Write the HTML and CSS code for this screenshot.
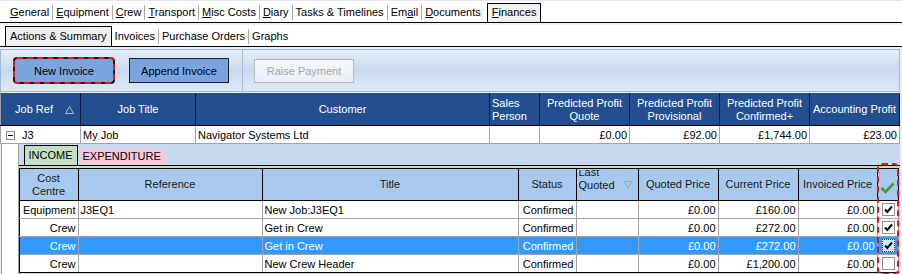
FILE: index.html
```html
<!DOCTYPE html>
<html lang="en">
<head>
    <meta charset="UTF-8">
    <title>Finances</title>
    <link rel="stylesheet" href="styles.css">
</head>
<body>

    <div class="tabbar tabbar-main">
        <span class="tab"><u>G</u>eneral</span>
        <span class="tab"><u>E</u>quipment</span>
        <span class="tab"><u>C</u>rew</span>
        <span class="tab"><u>T</u>ransport</span>
        <span class="tab"><u>M</u>isc Costs</span>
        <span class="tab"><u>D</u>iary</span>
        <span class="tab">Tasks &amp; Timelines</span>
        <span class="tab">Em<u>a</u>il</span>
        <span class="tab"><u>D</u>ocuments</span>
        <span class="tab active"><u>F</u>inances</span>
    </div>

    <div class="tabbar tabbar-sub">
        <span class="tab active">Actions &amp; Summary</span>
        <span class="tab">Invoices</span>
        <span class="tab">Purchase Orders</span>
        <span class="tab">Graphs</span>
    </div>

    <div class="toolbar">
        <button class="btn btn-primary btn-marked">New Invoice</button>
        <button class="btn btn-primary">Append Invoice</button>
        <span class="toolbar-sep"></span>
        <button class="btn btn-disabled" disabled>Raise Payment</button>
    </div>

    <table class="grid jobs">
        <colgroup>
            <col style="width:80px"><col style="width:115px"><col style="width:294px"><col style="width:50px">
            <col style="width:90px"><col style="width:90px"><col style="width:90px"><col style="width:90px">
        </colgroup>
        <thead>
            <tr>
                <th>
                    <div class="head-sort">
                        <span>Job Ref</span>
                        <svg class="sort-icon" width="9" height="8" viewBox="0 0 9 8"><path d="M4.5 0.5 L8.5 7.5 L0.5 7.5 Z" fill="none" stroke="#aab6c8"/></svg>
                    </div>
                </th>
                <th>Job Title</th>
                <th>Customer</th>
                <th class="left">Sales<br>Person</th>
                <th>Predicted Profit<br>Quote</th>
                <th>Predicted Profit<br>Provisional</th>
                <th>Predicted Profit<br>Confirmed+</th>
                <th>Accounting Profit</th>
            </tr>
        </thead>
        <tbody>
            <tr class="job-row">
                <td><span class="collapse-box"></span>J3</td>
                <td>My Job</td>
                <td>Navigator Systems Ltd</td>
                <td></td>
                <td class="num">£0.00</td>
                <td class="num">£92.00</td>
                <td class="num">£1,744.00</td>
                <td class="num">£23.00</td>
            </tr>
            <tr>
                <td colspan="8" class="detail-cell">
                    <div class="detail-wrap">
                        <div class="indent"></div>
                        <div class="detail">
                            <div class="subtabs">
                                <span class="subtab income">INCOME</span>
                                <span class="subtab expenditure">EXPENDITURE</span>
                            </div>
                            <div class="subpanel">
                                <table class="grid lines">
                                    <colgroup>
                                        <col style="width:59px"><col style="width:184px"><col style="width:256px"><col style="width:58px">
                                        <col style="width:62px"><col style="width:80px"><col style="width:80px"><col style="width:79px"><col style="width:21px">
                                    </colgroup>
                                    <thead>
                                        <tr>
                                            <th>Cost<br>Centre</th>
                                            <th>Reference</th>
                                            <th>Title</th>
                                            <th>Status</th>
                                            <th class="left">
                                                <div class="head-clip">
                                                    <span class="clipped">Last<br>Quoted</span>
                                                    <svg class="filter-icon" width="8" height="8" viewBox="0 0 8 8"><path d="M0.5 0.5 L7.5 0.5 L4 7.5 Z" fill="none" stroke="#9aa4b4"/></svg>
                                                </div>
                                            </th>
                                            <th>Quoted Price</th>
                                            <th>Current Price</th>
                                            <th>Invoiced Price</th>
                                            <th class="check-head">
                                                <svg width="15" height="12" viewBox="0 0 15 12"><path d="M1.5 6 L5.5 10 L13.5 1.5" fill="none" stroke="#36a336" stroke-width="2.6"/></svg>
                                            </th>
                                        </tr>
                                    </thead>
                                    <tbody>
                                        <tr>
                                            <td class="num">Equipment</td>
                                            <td>J3EQ1</td>
                                            <td>New Job:J3EQ1</td>
                                            <td class="num">Confirmed</td>
                                            <td></td>
                                            <td class="num">£0.00</td>
                                            <td class="num">£160.00</td>
                                            <td class="num">£0.00</td>
                                            <td class="check"><span class="checkbox checked"></span></td>
                                        </tr>
                                        <tr>
                                            <td class="num">Crew</td>
                                            <td></td>
                                            <td>Get in Crew</td>
                                            <td class="num">Confirmed</td>
                                            <td></td>
                                            <td class="num">£0.00</td>
                                            <td class="num">£272.00</td>
                                            <td class="num">£0.00</td>
                                            <td class="check"><span class="checkbox checked"></span></td>
                                        </tr>
                                        <tr class="selected">
                                            <td class="num">Crew</td>
                                            <td></td>
                                            <td>Get in Crew</td>
                                            <td class="num">Confirmed</td>
                                            <td></td>
                                            <td class="num">£0.00</td>
                                            <td class="num">£272.00</td>
                                            <td class="num">£0.00</td>
                                            <td class="check"><span class="checkbox checked"></span></td>
                                        </tr>
                                        <tr>
                                            <td class="num">Crew</td>
                                            <td></td>
                                            <td>New Crew Header</td>
                                            <td class="num">Confirmed</td>
                                            <td></td>
                                            <td class="num">£0.00</td>
                                            <td class="num">£1,200.00</td>
                                            <td class="num">£0.00</td>
                                            <td class="check"><span class="checkbox"></span></td>
                                        </tr>
                                    </tbody>
                                </table>
                            </div>
                            <div class="marker"></div>
                        </div>
                    </div>
                </td>
            </tr>
        </tbody>
    </table>

</body>
</html>
```

FILE: styles.css
```css
* {
    box-sizing: border-box;
}

body {
    margin: 0;
    width: 902px;
    height: 274px;
    overflow: hidden;
    background-color: #f0f0f0;
    font-family: 'Liberation Sans', Arial, sans-serif;
    font-size: 11px;
    color: #000;
}

/* tab strips */
.tabbar {
    display: flex;
    align-items: flex-end;
    background: #fff;
    border-bottom: 1px solid #000;
    margin-bottom: 2px;
}

.tabbar-main {
    height: 23px;
    border-top: 1px solid #dce7f5;
    padding-left: 7px;
}

.tabbar-sub {
    height: 22px;
    padding-left: 5px;
}

.tab {
    padding: 0 3px;
    line-height: 15px;
    margin-bottom: 2px;
    border-left: 1px solid #a8a8a8;
    white-space: nowrap;
}

.tab:first-child,
.tab.active + .tab {
    border-left: none;
}

.tab.active {
    border: 1px solid #000;
    border-bottom: none;
    background: #f0f0f0;
    padding: 1px 4px 2px;
    margin-bottom: 0;
    margin-left: 3px;
}

.tabbar-sub .tab.active {
    margin-left: 0;
    padding-top: 2px;
}

/* toolbar */
.toolbar {
    display: flex;
    align-items: center;
    height: 43px;
    margin-right: 2px;
    margin-bottom: 1px;
    padding-left: 12px;
    border: 1px solid #9cb8df;
    background: linear-gradient(#e6eef9, #c8d9ef 50%, #dfe9f7);
}

.btn {
    height: 25px;
    width: 100px;
    padding: 0;
    margin-right: 14px;
    font: inherit;
    color: #000;
    border: 1px solid #1e1e1e;
    background: #7ba3de;
}

.btn-marked {
    width: 102px;
    height: 27px;
    border: 2px dashed #ee1111;
    border-radius: 4px;
    background: linear-gradient(#7ba3de, #7ba3de) padding-box, #1a1a1a border-box;
}

.toolbar-sep {
    align-self: stretch;
    width: 1px;
    background: #a8bcd8;
    margin-right: 11px;
    margin-left: -1px;
}

.btn-disabled {
    height: 24px;
    color: #a6a6a6;
    border-color: #b8b8b8;
    background: linear-gradient(#f6f8fb, #eaeef4);
}

/* grids */
.grid {
    border-collapse: collapse;
    table-layout: fixed;
}

.grid td {
    height: 18px;
    padding: 0 2px;
    border: 1px solid #a3a3a3;
    white-space: nowrap;
    overflow: hidden;
    background: #fff;
}

.grid th {
    font-weight: normal;
    line-height: 13px;
    padding: 0 2px;
}

.grid .num {
    text-align: right;
}

.grid th.left {
    text-align: left;
}

.jobs {
    width: 899px;
}

.jobs th {
    height: 32px;
    color: #fff;
    background: #234f91;
    border: 1px solid #0d1c36;
    border-top-color: #234f91;
    border-bottom-color: #000;
}

.jobs th:first-child {
    border-left-color: #9aa0a8;
}

.head-sort {
    display: flex;
    align-items: center;
}

.head-sort span {
    flex: 1;
    text-align: center;
}

.sort-icon {
    margin-right: 4px;
}

.collapse-box {
    display: inline-block;
    width: 9px;
    height: 9px;
    margin: 0 7px 0 3px;
    vertical-align: -1px;
    border: 1px solid #8a8a8a;
    background: linear-gradient(#000, #000) center / 5px 1px no-repeat, #fff;
}

.jobs td:first-child {
    border-left-color: #9aa0a8;
}

/* detail */
.grid td.detail-cell {
    padding: 0;
    border: none;
    height: auto;
    background: transparent;
}

.detail-wrap {
    display: flex;
    height: 132px;
}

.indent {
    width: 18px;
    background: #fff;
    border-left: 1px solid #9aa0a8;
    border-right: 1px solid #a3a3a3;
}

.detail {
    position: relative;
    flex: 1;
    background: #c6d9ef;
    padding-top: 1px;
}

.subtabs {
    display: flex;
    align-items: flex-end;
    height: 20px;
    padding-left: 5px;
}

.subtab {
    padding: 0 4px;
    line-height: 15px;
}

.income {
    height: 20px;
    line-height: 19px;
    border: 1px solid #000;
    border-bottom: none;
    background: #c4e0c4;
}

.expenditure {
    margin-left: 1px;
    margin-bottom: 1px;
    background: #f8c8da;
}

.subpanel {
    border-top: 1px solid #000;
    background: #c4e0c4;
    padding-top: 2px;
}

.lines {
    width: 880px;
}

.lines td {
    height: 18px;
    line-height: 16px;
}

.lines th {
    height: 32px;
    background: #a8c9ee;
    border: 1px solid #000;
    color: #1a1a1a;
}

.lines th:first-child,
.lines td:first-child {
    border-left-color: #000;
}

.lines tr:last-child td {
    border-bottom-color: #000;
}

.head-clip {
    display: flex;
    align-items: center;
    height: 30px;
    overflow: hidden;
}

.clipped {
    flex: 1;
    margin-top: -12px;
    line-height: 13px;
}

.filter-icon {
    margin-right: 4px;
}

.check-head {
    padding: 10px 0 0 !important;
}

.grid td.check {
    padding: 0 0 0 4px;
}

.checkbox {
    display: block;
    width: 13px;
    height: 13px;
    border: 1px solid #8e8e8e;
    background: #fff;
}

.checkbox.checked {
    background: url("data:image/svg+xml;utf8,<svg xmlns='http://www.w3.org/2000/svg' width='11' height='11' viewBox='0 0 11 11'><path d='M2 5.5 L4.3 8 L9 2.5' fill='none' stroke='black' stroke-width='2'/></svg>") center no-repeat, #fff;
}

.lines tr.selected td {
    background: #3399ff;
    color: #fff;
    border-top: 1px dotted #b08a5a;
    border-bottom: 1px dotted #b08a5a;
}

.lines tr.selected .checkbox {
    border-style: dotted;
    border-color: #333;
    background-color: #cfe6ff;
}

/* red annotation round the tick column */
.marker {
    position: absolute;
    left: 858px;
    top: 19px;
    width: 22px;
    height: 112px;
    border: 2px dashed #ee1111;
    border-radius: 5px;
    pointer-events: none;
}
```
